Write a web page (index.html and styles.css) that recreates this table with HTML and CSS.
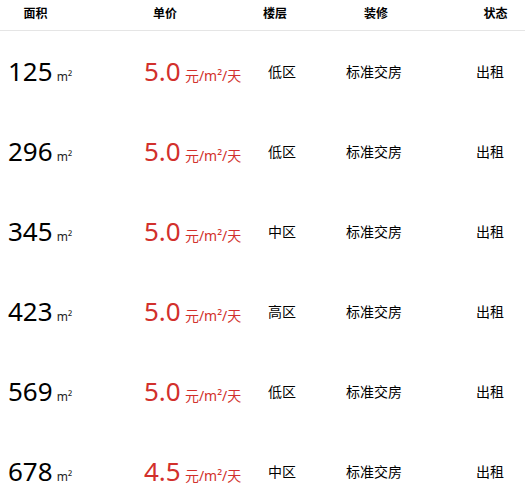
FILE: index.html
```html
<!DOCTYPE html>
<html lang="zh-CN">
<head>
<meta charset="utf-8">
<link rel="stylesheet" href="styles.css">
</head>
<body>
<div class="list">
  <div class="head">
    <div class="h h1">面积</div>
    <div class="h h2">单价</div>
    <div class="h h3">楼层</div>
    <div class="h h4">装修</div>
    <div class="h h5">状态</div>
  </div>
  <div class="row">
    <div class="area"><span class="num">125</span> <span class="unit">m²</span></div>
    <div class="price"><span class="num">5.0</span> <span class="punit">元/m²/天</span></div>
    <div class="cell">低区</div>
    <div class="cell">标准交房</div>
    <div class="cell status">出租</div>
  </div>
  <div class="row">
    <div class="area"><span class="num">296</span> <span class="unit">m²</span></div>
    <div class="price"><span class="num">5.0</span> <span class="punit">元/m²/天</span></div>
    <div class="cell">低区</div>
    <div class="cell">标准交房</div>
    <div class="cell status">出租</div>
  </div>
  <div class="row">
    <div class="area"><span class="num">345</span> <span class="unit">m²</span></div>
    <div class="price"><span class="num">5.0</span> <span class="punit">元/m²/天</span></div>
    <div class="cell">中区</div>
    <div class="cell">标准交房</div>
    <div class="cell status">出租</div>
  </div>
  <div class="row">
    <div class="area"><span class="num">423</span> <span class="unit">m²</span></div>
    <div class="price"><span class="num">5.0</span> <span class="punit">元/m²/天</span></div>
    <div class="cell">高区</div>
    <div class="cell">标准交房</div>
    <div class="cell status">出租</div>
  </div>
  <div class="row">
    <div class="area"><span class="num">569</span> <span class="unit">m²</span></div>
    <div class="price"><span class="num">5.0</span> <span class="punit">元/m²/天</span></div>
    <div class="cell">低区</div>
    <div class="cell">标准交房</div>
    <div class="cell status">出租</div>
  </div>
  <div class="row">
    <div class="area"><span class="num">678</span> <span class="unit">m²</span></div>
    <div class="price"><span class="num">4.5</span> <span class="punit">元/m²/天</span></div>
    <div class="cell">中区</div>
    <div class="cell">标准交房</div>
    <div class="cell status">出租</div>
  </div>
</div>
</body>
</html>
```
FILE: styles.css
```css
html, body {
  margin: 0;
  padding: 0;
  background: #fff;
}
body {
  font-family: "Noto Sans", "Noto Sans CJK SC", sans-serif;
  color: #000;
  overflow: hidden;
}
.head {
  display: grid;
  grid-template-columns: 71px 188px 32px 170px 1fr;
  height: 31px;
  box-sizing: border-box;
  padding-top: 5px;
  border-bottom: 1px solid #e5e5e5;
}
.h {
  font-family: "Noto Sans CJK SC", sans-serif;
  font-size: 12px;
  font-weight: bold;
  line-height: 16px;
  text-align: center;
  white-space: nowrap;
}
.h5 {
  padding-left: 5px;
}
.row {
  display: grid;
  grid-template-columns: 144px 118px 40px 144px 1fr;
  align-items: center;
  height: 80px;
}
.area {
  padding-left: 8px;
  white-space: nowrap;
}
.num {
  font-size: 26px;
  line-height: 30px;
}
.unit {
  font-size: 12px;
  color: #222;
}
.price {
  color: #d2302c;
  white-space: nowrap;
}
.punit {
  font-family: "Noto Sans", "Noto Sans CJK SC", sans-serif;
  font-size: 14px;
}
.cell {
  font-family: "Noto Sans CJK SC", sans-serif;
  font-size: 14px;
  text-align: center;
  white-space: nowrap;
}
.status {
  padding-left: 9px;
}
```
